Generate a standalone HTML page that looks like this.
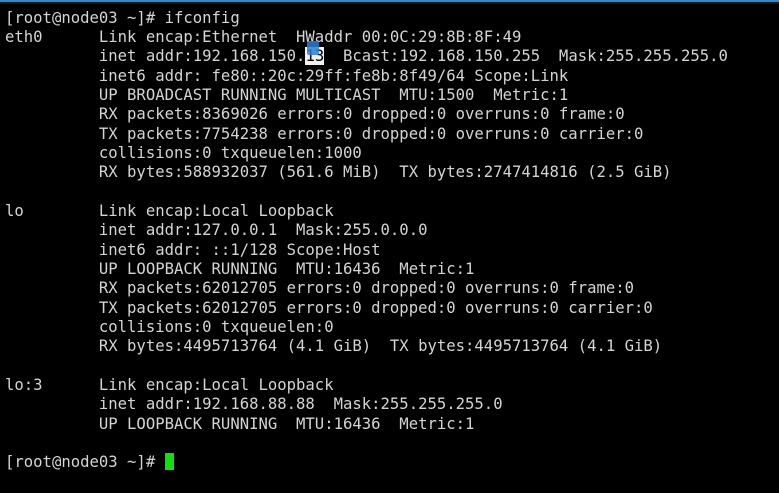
<!DOCTYPE html>
<html><head><meta charset="utf-8"><style>
html,body{margin:0;padding:0;background:#000;width:779px;height:493px;overflow:hidden}
.top{position:absolute;left:0;top:0;width:779px;height:2px;background:#3a86c4}
.top2{position:absolute;left:0;top:2px;width:779px;height:2px;background:#0a1a28}
pre{position:absolute;left:5px;top:8.5px;margin:0;font-family:"DejaVu Sans Mono","Liberation Mono",monospace;font-size:15.6px;line-height:19.35px;color:#d4d4d4;white-space:pre}
.hl{background:#f0f0f0;color:#000}
.cur{display:inline-block;width:9px;height:17px;background:#10e010;vertical-align:-3px}
.ptr{position:absolute;left:307px;top:41px;width:12px;height:14px;background:#2a7fd6;opacity:.85;border-radius:2px}
</style></head><body>
<div class="top"></div><div class="top2"></div>
<pre>[root@node03 ~]# ifconfig
eth0      Link encap:Ethernet  HWaddr 00:0C:29:8B:8F:49  
          inet addr:192.168.150.<span class="hl">13</span>  Bcast:192.168.150.255  Mask:255.255.255.0
          inet6 addr: fe80::20c:29ff:fe8b:8f49/64 Scope:Link
          UP BROADCAST RUNNING MULTICAST  MTU:1500  Metric:1
          RX packets:8369026 errors:0 dropped:0 overruns:0 frame:0
          TX packets:7754238 errors:0 dropped:0 overruns:0 carrier:0
          collisions:0 txqueuelen:1000 
          RX bytes:588932037 (561.6 MiB)  TX bytes:2747414816 (2.5 GiB)

lo        Link encap:Local Loopback  
          inet addr:127.0.0.1  Mask:255.0.0.0
          inet6 addr: ::1/128 Scope:Host
          UP LOOPBACK RUNNING  MTU:16436  Metric:1
          RX packets:62012705 errors:0 dropped:0 overruns:0 frame:0
          TX packets:62012705 errors:0 dropped:0 overruns:0 carrier:0
          collisions:0 txqueuelen:0 
          RX bytes:4495713764 (4.1 GiB)  TX bytes:4495713764 (4.1 GiB)

lo:3      Link encap:Local Loopback  
          inet addr:192.168.88.88  Mask:255.255.255.0
          UP LOOPBACK RUNNING  MTU:16436  Metric:1

[root@node03 ~]# <span class="cur"></span></pre>
<div class="ptr"></div>
</body></html>
